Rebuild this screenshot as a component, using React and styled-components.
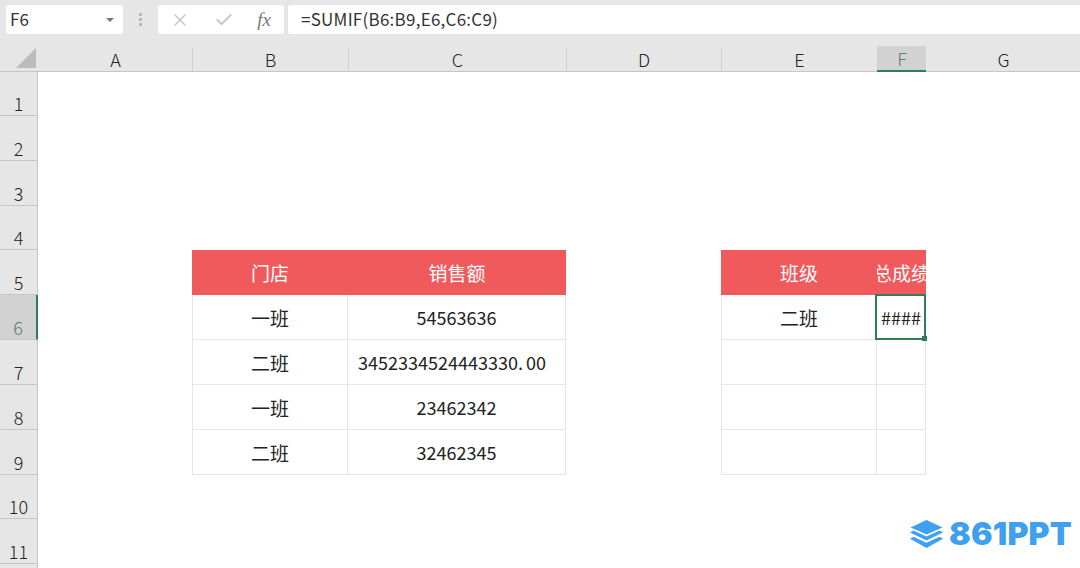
import styled, { createGlobalStyle } from "styled-components";
import { X, Check } from "lucide-react";

const columns = ["A", "B", "C", "D", "E", "F", "G"];
const rowCount = 12;

const Dot = styled.span`
margin-right: 3px;
`;

// only the filled cells, keyed by "row-column"
const cells = {
    "5-B": { text: "门店", head: true, cjk: true, first: true },
    "5-C": { text: "销售额", head: true, cjk: true },
    "6-B": { text: "一班", cjk: true, first: true },
    "6-C": { text: "54563636" },
    "7-B": { text: "二班", cjk: true, first: true },
    "7-C": { text: <>3452334524443330<Dot>.</Dot>00</>, long: true },
    "8-B": { text: "一班", cjk: true, first: true },
    "8-C": { text: "23462342" },
    "9-B": { text: "二班", cjk: true, first: true },
    "9-C": { text: "32462345" },
    "5-E": { text: "班级", head: true, cjk: true, first: true },
    "5-F": { text: "总成绩", head: true, cjk: true },
    "6-E": { text: "二班", cjk: true, first: true },
    "6-F": { text: "####", selected: true },
    "7-E": { text: "", first: true },
    "7-F": { text: "" },
    "8-E": { text: "", first: true },
    "8-F": { text: "" },
    "9-E": { text: "", first: true },
    "9-F": { text: "" },
};

export default function App() {
    const rows = Array.from({ length: rowCount }, (_, i) => i + 1);
    return (
        <>
            <GlobalStyle />
            <Page>
                <FormulaBar>
                    <NameBox>
                        F6
                        <Caret />
                    </NameBox>
                    <Grip>
                        <i />
                        <i />
                        <i />
                    </Grip>
                    <ActionBox>
                        <X size={20} strokeWidth={1.6} />
                        <Check size={20} strokeWidth={2.2} />
                        <Fx>fx</Fx>
                    </ActionBox>
                    <FormulaInput>=SUMIF(B6:B9,E6,C6:C9)</FormulaInput>
                </FormulaBar>
                <Sheet>
                    <Corner>
                        <svg width="20" height="20" viewBox="0 0 20 20">
                            <path d="M20 0V20H0Z" fill="#bcbcbc" />
                        </svg>
                    </Corner>
                    {columns.map((col) => (
                        <ColumnHead key={col} $active={col === "F"} $divider={col !== "A" && col !== "F" && col !== "G"}>
                            {col}
                        </ColumnHead>
                    ))}
                    {rows.map((row) => [
                        <RowHead key={`r${row}`} $active={row === 6}>
                            {row < 12 ? row : ""}
                        </RowHead>,
                        ...columns.map((col) => {
                            const cell = cells[`${row}-${col}`];
                            if (!cell) return <Blank key={`${row}-${col}`} />;
                            return (
                                <Cell
                                    key={`${row}-${col}`}
                                    $head={cell.head}
                                    $cjk={cell.cjk}
                                    $first={cell.first}
                                    $long={cell.long}
                                    $selected={cell.selected}
                                >
                                    <span>{cell.text}</span>
                                </Cell>
                            );
                        }),
                    ])}
                </Sheet>
                <Logo>
                    <svg width="33" height="28" viewBox="0 0 33 28">
                        <path d="M16.5 0L32.5 7.5L16.5 14.5L0.5 7.5Z" fill="#3fa0f0" />
                        <path d="M3.5 10.6L16.5 16.4L29.5 10.6L33 12.6L16.5 20.4L0 12.6Z" fill="#3fa0f0" />
                        <path d="M3.5 16.8L16.5 22.8L29.5 16.8L33 18.8L16.5 28L0 18.8Z" fill="#3fa0f0" />
                    </svg>
                    <LogoText>861PPT</LogoText>
                </Logo>
            </Page>
        </>
    );
}

const GlobalStyle = createGlobalStyle`
html, body {
    margin: 0;
    padding: 0;
    background: #fff;
}
`;

const Page = styled.div`
position: relative;
width: 1080px;
height: 568px;
overflow: hidden;
background: #fff;
font-family: "Noto Sans CJK SC", "Noto Sans", sans-serif;
color: #222;
`;

const FormulaBar = styled.div`
display: flex;
align-items: center;
height: 44px;
padding: 0 0 5px 6px;
box-sizing: border-box;
background: #e6e6e6;
`;

const NameBox = styled.div`
display: flex;
align-items: center;
justify-content: space-between;
width: 117px;
height: 29px;
padding: 0 9px 2px 4px;
box-sizing: border-box;
background: #fff;
border-radius: 3px;
font-size: 17px;
color: #333;
`;

const Caret = styled.span`
width: 0;
height: 0;
margin-top: 2px;
border-left: 4px solid transparent;
border-right: 4px solid transparent;
border-top: 4px solid #777;
`;

const Grip = styled.div`
display: flex;
flex-direction: column;
gap: 2px;
width: 35px;
align-items: center;

i {
    width: 3px;
    height: 3px;
    background: #b8b8b8;
}
`;

const ActionBox = styled.div`
display: flex;
align-items: center;
justify-content: space-between;
width: 126px;
height: 29px;
padding: 0 13px 0 12px;
box-sizing: border-box;
background: #fff;
border-radius: 3px;
color: #c4c4c4;
`;

const Fx = styled.span`
font-family: "Liberation Serif", serif;
font-style: italic;
font-size: 19px;
color: #777;
`;

const FormulaInput = styled.div`
display: flex;
align-items: center;
flex: 1;
height: 29px;
margin-left: 4px;
padding: 0 0 3px 13px;
box-sizing: border-box;
background: #fff;
border-radius: 3px 0 0 3px;
font-size: 17px;
letter-spacing: 0.25px;
color: #333;
`;

const Sheet = styled.div`
display: grid;
grid-template-columns: 38px 154px 156px 218px 155px 156px 49px 154px;
grid-template-rows: 28px 44px repeat(2, 45px) 44px repeat(5, 45px) 44px repeat(2, 45px);
`;

const Corner = styled.div`
display: flex;
justify-content: flex-end;
align-items: flex-end;
padding: 0 2px 3px 0;
box-sizing: border-box;
background: #e6e6e6;
border-bottom: 1px solid #c6c6c6;
`;

const ColumnHead = styled.div`
position: relative;
display: flex;
align-items: center;
justify-content: center;
box-sizing: border-box;
padding: 4px 0 2px 1px;
font-size: 18px;
font-weight: 300;
background: ${(p) =>
    p.$active ? "linear-gradient(#e6e6e6 2px, #d2d2d2 2px)" : "#e6e6e6"};
color: ${(p) => (p.$active ? "#4f8268" : "#222")};
border-bottom: ${(p) => (p.$active ? "2px solid #2e7d57" : "1px solid #c6c6c6")};

${(p) =>
    p.$divider &&
    `
    &::before {
        content: "";
        position: absolute;
        left: 0;
        top: 4px;
        bottom: 0;
        width: 1px;
        background: #d0d0d0;
    }
`}
`;

const RowHead = styled.div`
display: flex;
align-items: flex-end;
justify-content: center;
box-sizing: border-box;
font-size: 18px;
font-weight: 300;
line-height: 23px;
background: ${(p) => (p.$active ? "#d2d2d2" : "#e6e6e6")};
color: ${(p) => (p.$active ? "#4f8268" : "#222")};
border-bottom: 1px solid #c6c6c6;
border-right: ${(p) => (p.$active ? "2px solid #2e7d57" : "1px solid #c6c6c6")};
`;

const Blank = styled.div`
background: #fff;
`;

const Cell = styled.div`
position: relative;
display: flex;
align-items: center;
justify-content: center;
min-width: 0;
white-space: nowrap;
font-size: ${(p) => (p.$cjk ? "19px" : "18px")};
font-weight: 400;
padding-right: ${(p) => (p.$long ? "9px" : "0")};
background: ${(p) => (p.$head ? "#f05a5c" : "#fff")};
color: ${(p) => (p.$head ? "#fff" : "#222")};
border-style: solid;
border-color: #e6e6e6;
border-width: ${(p) => (p.$head ? "0" : `0 1px 1px ${p.$first ? "1px" : "0"}`)};
box-sizing: border-box;
z-index: ${(p) => (p.$selected ? 1 : 0)};

& > span {
    flex: none;
}

${(p) => p.$head && "overflow: hidden;"}

${(p) =>
    p.$selected &&
    `
    &::before {
        content: "";
        position: absolute;
        inset: -1px -1px -1px -2px;
        border: 2px solid #2e7d57;
        pointer-events: none;
    }
    &::after {
        content: "";
        position: absolute;
        right: -2px;
        bottom: -2px;
        width: 5px;
        height: 5px;
        background: #2e7d57;
    }
`}
`;

const Logo = styled.div`
position: absolute;
left: 910px;
top: 519px;
display: flex;
align-items: center;
gap: 6px;
`;

const LogoText = styled.span`
font-family: Inter, sans-serif;
font-weight: 900;
font-size: 32px;
line-height: 30px;
letter-spacing: 0.2px;
color: #3fa0f0;
`;
